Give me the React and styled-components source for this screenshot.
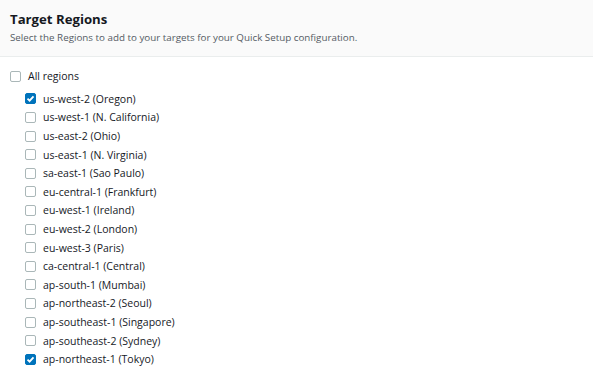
import React from "react";
import styled, { createGlobalStyle } from "styled-components";

const Global = createGlobalStyle`
  html, body { margin: 0; padding: 0; background: #ffffff; }
  body { font-family: "Open Sans", "Liberation Sans", Arial, sans-serif; color: #16191f; }
`;

const Page = styled.div`
  width: 593px;
  height: 384px;
  background: #fff;
  overflow: hidden;
`;

const Header = styled.header`
  background: #fafafa;
  border-bottom: 1px solid #eaeded;
  height: 57px;
  box-sizing: border-box;
  padding: 10px 10px 0 10px;
`;

const Title = styled.h2`
  margin: 0;
  font-size: 13.2px;
  line-height: 18px;
  font-weight: 700;
  color: #16191f;
`;

const Subtitle = styled.p`
  margin: 3px 0 0;
  font-size: 9.8px;
  line-height: 14px;
  color: #545b64;
`;

const List = styled.div`
  display: flex;
  flex-direction: column;
  padding: 10px 10px 0 10px;
`;

const Children = styled.div`
  display: flex;
  flex-direction: column;
  padding-left: 15px;
  margin-top: 4px;
`;

const Row = styled.label`
  display: flex;
  align-items: center;
  gap: 7px;
  height: 18.6px;
  font-size: 10.5px;
  color: #16191f;
`;

const Box = styled.span`
  width: 11px;
  height: 11px;
  box-sizing: border-box;
  border-radius: 2px;
  border: 1px solid ${(p) => (p.$checked ? "#0073bb" : "#aab7b8")};
  background: ${(p) => (p.$checked ? "#0073bb" : "#fff")};
  display: inline-flex;
  align-items: center;
  justify-content: center;
  flex: none;
`;

function Check({ checked }) {
  return (
    <Box $checked={checked}>
      {checked && (
        <svg width="9" height="9" viewBox="0 0 9 9">
          <path d="M1.5 4.6 L3.6 6.6 L7.5 2.3" fill="none" stroke="#fff" strokeWidth="1.8" />
        </svg>
      )}
    </Box>
  );
}

const regions = [
  ["us-west-2 (Oregon)", true],
  ["us-west-1 (N. California)", false],
  ["us-east-2 (Ohio)", false],
  ["us-east-1 (N. Virginia)", false],
  ["sa-east-1 (Sao Paulo)", false],
  ["eu-central-1 (Frankfurt)", false],
  ["eu-west-1 (Ireland)", false],
  ["eu-west-2 (London)", false],
  ["eu-west-3 (Paris)", false],
  ["ca-central-1 (Central)", false],
  ["ap-south-1 (Mumbai)", false],
  ["ap-northeast-2 (Seoul)", false],
  ["ap-southeast-1 (Singapore)", false],
  ["ap-southeast-2 (Sydney)", false],
  ["ap-northeast-1 (Tokyo)", true],
];

export default function App() {
  return (
    <Page>
      <Global />
      <Header>
        <Title>Target Regions</Title>
        <Subtitle>Select the Regions to add to your targets for your Quick Setup configuration.</Subtitle>
      </Header>
      <List>
        <Row>
          <Check checked={false} />
          All regions
        </Row>
        <Children>
          {regions.map(([name, checked]) => (
            <Row key={name}>
              <Check checked={checked} />
              {name}
            </Row>
          ))}
        </Children>
      </List>
    </Page>
  );
}
